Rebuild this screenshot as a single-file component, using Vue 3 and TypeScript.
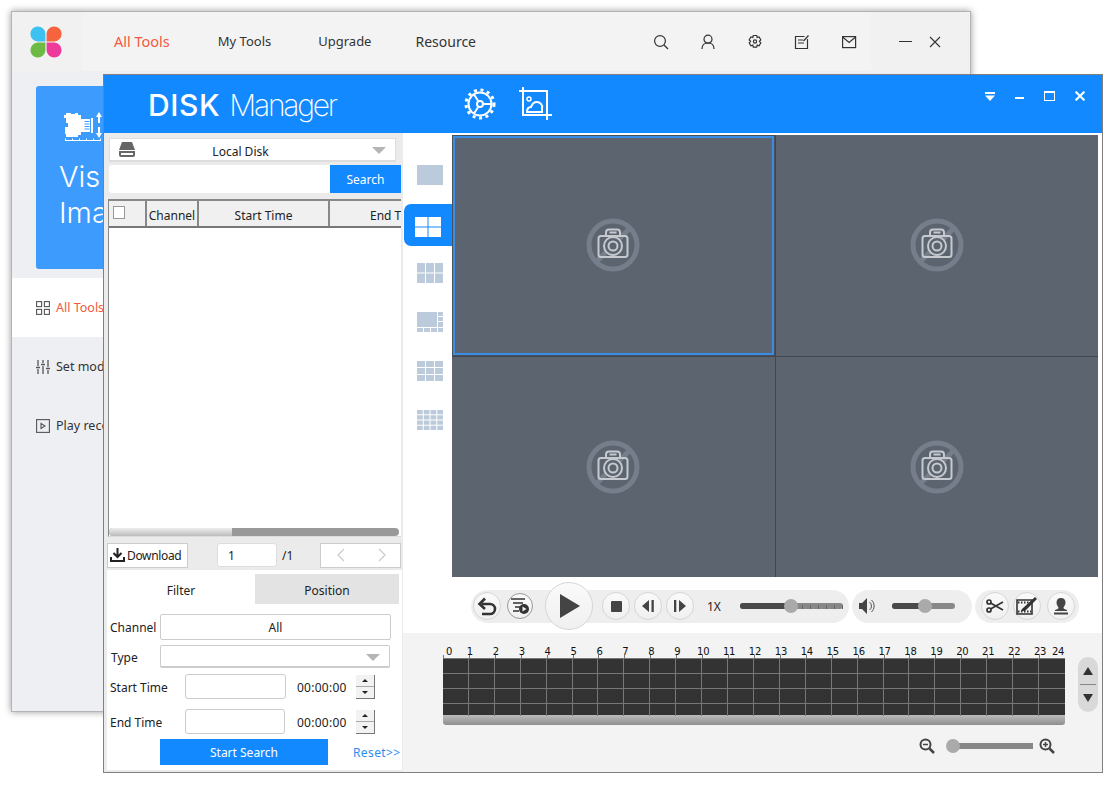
<script setup lang="ts">
const navItems = [
  { label: 'All Tools', cls: 'nav-active' },
  { label: 'My Tools', cls: 'nav-small' },
  { label: 'Upgrade', cls: 'nav-small' },
  { label: 'Resource', cls: 'nav-big' },
];

const hours = Array.from({ length: 24 }, (_, i) => i);
const cells = Array.from({ length: 96 }, (_, i) => i);
const videoCells = [0, 1, 2, 3];

// layout thumbnails on a 26x20 box
function gridRects(cols: number, rows: number) {
  const w = (26 - (cols - 1)) / cols;
  const h = (20 - (rows - 1)) / rows;
  const out: { x: number; y: number; w: number; h: number }[] = [];
  for (let r = 0; r < rows; r++) {
    for (let c = 0; c < cols; c++) {
      out.push({ x: c * (w + 1), y: r * (h + 1), w, h });
    }
  }
  return out;
}

const mixed = [
  { x: 0, y: 0, w: 20, h: 15 },
  { x: 21, y: 0, w: 5, h: 4 },
  { x: 21, y: 5, w: 5, h: 4 },
  { x: 21, y: 10, w: 5, h: 5 },
  { x: 0, y: 16, w: 6, h: 4 },
  { x: 7, y: 16, w: 6, h: 4 },
  { x: 14, y: 16, w: 6, h: 4 },
  { x: 21, y: 16, w: 5, h: 4 },
];

const layouts = [
  { rects: gridRects(1, 1), active: false },
  { rects: gridRects(2, 2), active: true },
  { rects: gridRects(3, 2), active: false },
  { rects: mixed, active: false },
  { rects: gridRects(3, 3), active: false },
  { rects: gridRects(4, 4), active: false },
];

const sliderTicks = [0, 1, 2, 3, 4, 5];
</script>

<template>
  <div class="desktop">
    <!-- back window -->
    <section class="back-win">
      <header class="back-head">
        <div class="logo-cell">
          <svg width="32" height="32" viewBox="0 0 32 32">
            <path d="M15.4 15.4H7.5A7.5 7.5 0 1 1 15.4 7.5Z" fill="#3cc1f1" />
            <path d="M16.6 15.4V7.5A7.5 7.5 0 1 1 24.5 15.4Z" fill="#f5643e" />
            <path d="M15.4 16.6V24.5A7.5 7.5 0 1 1 7.5 16.6Z" fill="#6dbb45" />
            <path d="M16.6 16.6H24.5A7.5 7.5 0 1 1 16.6 24.5Z" fill="#ee3b9b" />
          </svg>
        </div>
        <nav class="back-nav">
          <a v-for="item in navItems" :key="item.label" :class="item.cls">{{ item.label }}</a>
        </nav>
        <div class="back-icons">
          <svg width="16" height="16" viewBox="0 0 16 16" fill="none" stroke="#333" stroke-width="1.2">
            <circle cx="7" cy="7" r="5.4" /><path d="M11 11l4 4" />
          </svg>
          <svg width="16" height="16" viewBox="0 0 16 16" fill="none" stroke="#333" stroke-width="1.2">
            <circle cx="8" cy="5.2" r="4" /><path d="M2 15c0-4 2.5-6 6-6s6 2 6 6" />
          </svg>
          <svg width="16" height="16" viewBox="0 0 16 16" fill="none" stroke="#333" stroke-width="1.2">
            <path d="M6.3 1.5h3.4l.5 2 1.9-.6 1.7 2.9-1.4 1.5 1.4 1.5-1.7 2.9-1.9-.6-.5 2H6.300l-.5-2-1.900.6-1.700-2.900L3.600 7.300 2.200 5.800l1.700-2.900 1.900.6z" />
            <circle cx="8" cy="7.500" r="1.600" />
          </svg>
          <svg width="16" height="16" viewBox="0 0 16 16" fill="none" stroke="#333" stroke-width="1.2">
            <path d="M13.500 5v9.500h-12v-12h9" /><path d="M4 6h5M4 9h6" /><path d="M9.500 7l5-5.500" />
          </svg>
          <svg width="16" height="14" viewBox="0 0 16 14" fill="none" stroke="#333" stroke-width="1.2">
            <rect x="1.600" y="1.600" width="13" height="11" /><path d="M1.600 2l6.500 5.500L14.600 2" />
          </svg>
        </div>
        <div class="back-controls">
          <span class="back-min"></span>
          <svg width="12" height="12" viewBox="0 0 12 12" stroke="#333" stroke-width="1.100">
            <path d="M1 1l10 10M11 1L1 11" />
          </svg>
        </div>
      </header>
      <div class="back-body">
        <div class="banner">
          <svg class="banner-icon" width="40" height="30" viewBox="0 0 40 30" fill="#fff">
            <path d="M1 3h2V1h5v1h4V1h3v2h3v4h3v13h-3v3h-3v2H3v-3H2v-7h3v-4H3V6H1z" />
            <path d="M20 7h7v13h-7z" />
            <path d="M21.500 9.500h5M21.500 12h5M21.500 14.500h5M21.500 17h5" stroke="#3d9bfe" stroke-width="1" />
            <path d="M28 6h2v15h-2z" />
            <path d="M36 0l3 5h-2v6h-2V5h-2zM36 26l-3-5h2v-6h2v6h2z" />
            <path d="M2 28h36v1H2zM2 26.500h1v2H2zM9 26.500h1v2H9zM16 26.500h1v2h-1zM23 26.500h1v2h-1zM30 26.500h1v2h-1zM37 26.500h1v2h-1z" />
          </svg>
          <p class="banner-title">Vis<br />Ima</p>
        </div>
        <ul class="side-menu">
          <li class="menu-on">
            <svg width="14" height="14" viewBox="0 0 14 14" fill="none" stroke="#555" stroke-width="1.100">
              <rect x=".6" y=".6" width="5" height="5" /><rect x="8.400" y=".6" width="5" height="5" />
              <rect x=".6" y="8.400" width="5" height="5" /><rect x="8.400" y="8.400" width="5" height="5" />
            </svg>
            All Tools
          </li>
          <li>
            <svg width="14" height="14" viewBox="0 0 14 14" fill="none" stroke="#555" stroke-width="1.300">
              <path d="M2 0v6M2 9v5M7 0v3M7 6v8M12 0v7M12 10v4" /><path d="M0 7.500h4M5 4.500h4M10 8.500h4" />
            </svg>
            Set mode
          </li>
          <li>
            <svg width="14" height="14" viewBox="0 0 14 14" fill="none" stroke="#555" stroke-width="1.100">
              <rect x=".6" y=".6" width="12.800" height="12.800" /><path d="M5 4.500l4 2.500-4 2.500z" />
            </svg>
            Play record
          </li>
        </ul>
      </div>
    </section>

    <!-- front window -->
    <section class="disk-win">
      <header class="disk-head">
        <h1 class="disk-title"><b>DISK</b><span>Manager</span></h1>
        <div class="head-tools">
          <svg width="32" height="33" viewBox="0 0 32 33" fill="none" stroke="#fff" stroke-width="2">
            <circle cx="16" cy="17" r="11.500" />
            <circle cx="16" cy="17" r="14" stroke-width="3" stroke-dasharray="3 3.600" />
            <circle cx="16" cy="17" r="3" />
            <path d="M19 17h8M14.500 14.500L10 7.500M14.500 19.500L10 26.500" />
          </svg>
          <svg width="33" height="33" viewBox="0 0 33 33" fill="none" stroke="#fff" stroke-width="2">
            <path d="M4 0v28h29" /><path d="M0 4h28v29" />
            <circle cx="10" cy="12" r="2" stroke-width="1.500" />
            <path d="M8 25c0-3 1-5 4-5 1-3 3-5 6-5s6 3 5 6v4z" />
          </svg>
        </div>
        <div class="win-buttons">
          <svg width="10" height="9" viewBox="0 0 10 9" fill="#fff"><path d="M0 0h10v2H0zM0 3.500h10L5 9z" /></svg>
          <span class="win-min"></span>
          <span class="win-max"></span>
          <svg width="10" height="10" viewBox="0 0 10 10" stroke="#fff" stroke-width="2"><path d="M.6.6l8.800 8.800M9.400.6L.6 9.400" /></svg>
        </div>
      </header>

      <div class="disk-main">
        <aside class="left-panel">
          <div class="disk-select">
            <svg class="hdd" width="18" height="15" viewBox="0 0 18 15">
              <path d="M4 0h10l3 8H1z" fill="#666" />
              <path d="M1 9h16v4a2 2 0 0 1-2 2H3a2 2 0 0 1-2-2z" fill="#666" />
              <rect x="3" y="11" width="12" height="2" fill="#fff" />
            </svg>
            <span>Local Disk</span>
            <i class="caret"></i>
          </div>
          <div class="search-row">
            <div class="search-input"></div>
            <button class="search-btn">Search</button>
          </div>
          <div class="rec-table">
            <div class="rec-head">
              <div class="col-check"><span class="checkbox"></span></div>
              <div class="col-channel">Channel</div>
              <div class="col-start">Start Time</div>
              <div class="col-end">End T</div>
            </div>
            <div class="rec-body"></div>
            <div class="rec-scroll"><div class="rec-thumb"></div></div>
          </div>
          <div class="pager-row">
            <button class="download">
              <svg width="15" height="14" viewBox="0 0 15 14" fill="none" stroke="#222" stroke-width="2">
                <path d="M7.500 0v8M3.500 5l4 4 4-4" /><path d="M1 9v4h13V9" />
              </svg>
              Download
            </button>
            <div class="page-input">1</div>
            <span class="page-total">/1</span>
            <div class="page-nav">
              <svg width="8" height="14" viewBox="0 0 8 14" fill="none" stroke="#ccc" stroke-width="1.300"><path d="M7 1L1 7l6 6" /></svg>
              <svg width="8" height="14" viewBox="0 0 8 14" fill="none" stroke="#ccc" stroke-width="1.300"><path d="M1 1l6 6-6 6" /></svg>
            </div>
          </div>
          <div class="filter-box">
            <div class="tabs">
              <div class="tab tab-on">Filter</div>
              <div class="tab">Position</div>
            </div>
            <div class="form-row row-channel">
              <label class="lbl-short">Channel</label>
              <div class="field field-all">All</div>
            </div>
            <div class="form-row row-type">
              <label class="lbl-short lbl-type">Type</label>
              <div class="field field-type"><i class="caret"></i></div>
            </div>
            <div class="form-row row-time">
              <label class="lbl-long">Start Time</label>
              <div class="field date-a"></div>
              <span class="time">00:00:00</span>
              <div class="spin"><span class="spin-up"></span><span class="spin-down"></span></div>
            </div>
            <div class="form-row row-time row-end">
              <label class="lbl-long">End Time</label>
              <div class="field date-b"></div>
              <span class="time">00:00:00</span>
              <div class="spin"><span class="spin-up"></span><span class="spin-down"></span></div>
            </div>
            <div class="form-row row-submit">
              <button class="start-btn">Start Search</button>
              <a class="reset">Reset&gt;&gt;</a>
            </div>
          </div>
        </aside>

        <div class="right-panel">
          <div class="stage">
            <div class="layouts">
              <div v-for="(l, i) in layouts" :key="i" class="layout-item" :class="{ 'layout-on': l.active }">
                <svg width="26" height="20" viewBox="0 0 26 20">
                  <rect v-for="(r, j) in l.rects" :key="j" :x="r.x" :y="r.y" :width="r.w" :height="r.h" :fill="l.active ? '#fff' : '#bccbdc'" />
                </svg>
              </div>
            </div>
            <div class="video-grid">
              <div v-for="c in videoCells" :key="c" class="video-cell" :class="{ 'video-on': c === 0 }">
                <svg width="54" height="54" viewBox="0 0 54 54" fill="none">
                  <circle cx="27" cy="27" r="24" stroke="#757e8a" stroke-width="5" />
                  <path d="M10 44L44 10" stroke="#757e8a" stroke-width="5" />
                  <g stroke="#c6cacf" stroke-width="2">
                    <rect x="12.500" y="18" width="29" height="21" rx="2.500" />
                    <path d="M20 18v-3.500a3 3 0 0 1 3-3h8a3 3 0 0 1 3 3V18" />
                    <circle cx="27" cy="28" r="9" fill="#5c6470" />
                    <circle cx="27" cy="28" r="4.500" />
                    <path d="M23.500 14.500h7" />
                  </g>
                </svg>
              </div>
            </div>
          </div>

          <div class="controls">
            <div class="pill pill-play">
              <button class="round r-back">
                <svg width="20" height="19" viewBox="0 0 20 19" fill="none" stroke="#333" stroke-width="2.600">
                  <path d="M5 7h8a5 5 0 0 1 0 10H5" /><path d="M8 1.500L2.500 7 8 12" />
                </svg>
              </button>
              <button class="round r-list">
                <svg width="20" height="18" viewBox="0 0 20 18">
                  <path d="M1 2h14M3 6h10M5 10h5M3 14h6" stroke="#333" stroke-width="1.300" fill="none" />
                  <circle cx="14" cy="12" r="5" fill="#333" /><path d="M12.500 9.500l4 2.500-4 2.500z" fill="#eee" />
                </svg>
              </button>
              <button class="round r-play">
                <svg width="20" height="24" viewBox="0 0 20 24" fill="#444"><path d="M0 0l20 12L0 24z" /></svg>
              </button>
              <button class="round r-stop">
                <svg width="11" height="11" viewBox="0 0 11 11" fill="#444"><rect width="11" height="11" rx="1" /></svg>
              </button>
              <button class="round r-gap">
                <svg width="12" height="12" viewBox="0 0 12 12" fill="#444"><path d="M7 0v12L0 6zM9.500 0h2.300v12H9.500z" /></svg>
              </button>
              <button class="round r-gap">
                <svg width="12" height="12" viewBox="0 0 12 12" fill="#444"><path d="M5 0v12l7-6zM0 0h2.300v12H0z" /></svg>
              </button>
              <span class="speed">1X</span>
              <div class="slider speed-slider">
                <div class="slider-fill"></div>
                <div class="slider-knob"></div>
                <div class="slider-ticks"><i v-for="t in sliderTicks" :key="t"></i></div>
              </div>
            </div>
            <div class="pill pill-sound">
              <svg width="17" height="16" viewBox="0 0 17 16">
                <path d="M0 5h3l5-5v16l-5-5H0z" fill="#444" />
                <path d="M10.500 4a5 5 0 0 1 0 8M12.500 2a8 8 0 0 1 0 12" fill="none" stroke="#555" stroke-width="1" />
              </svg>
              <div class="slider sound-slider">
                <div class="slider-fill"></div>
                <div class="slider-knob"></div>
              </div>
            </div>
            <div class="pill pill-tools">
              <button class="round">
                <svg width="18" height="14" viewBox="0 0 18 14" fill="none" stroke="#333" stroke-width="1.700">
                  <circle cx="3" cy="3" r="2" /><circle cx="3" cy="11" r="2" /><path d="M4.500 4L17 11M4.500 10L17 3" />
                </svg>
              </button>
              <button class="round">
                <svg width="22" height="20" viewBox="0 0 22 20">
                  <path d="M1 4h15v14H1z" fill="none" stroke="#333" stroke-width="1.600" />
                  <path d="M2 6.500h13M2 15.500h13" stroke="#333" stroke-dasharray="1.500 1.500" stroke-width="2" />
                  <path d="M6 13L19 1l2 2L9 15H5z" fill="#333" />
                </svg>
              </button>
              <button class="round">
                <svg width="18" height="18" viewBox="0 0 18 18" fill="#444">
                  <path d="M9 1c3 0 4.500 2 4.500 4.500S12 9.500 11.500 10.500 13 12.500 15 13v1H3v-1c2-.5 4-1.500 3.500-2.500S4.500 8 4.500 5.500 6 1 9 1z" />
                  <rect x="2" y="15.500" width="14" height="2" />
                </svg>
              </button>
            </div>
          </div>

          <div class="timeline">
            <div class="tl-col">
              <div class="ruler">
                <div v-for="h in hours" :key="h" class="ruler-cell" :class="{ 'ruler-first': h === 0 }">
                  <span>{{ h }}</span>
                  <span v-if="h === 23" class="ruler-last">24</span>
                </div>
              </div>
              <div class="tl-grid">
                <div v-for="c in cells" :key="c" class="tl-cell"></div>
              </div>
              <div class="tl-bar"></div>
              <div class="zoom-row">
                <svg width="16" height="16" viewBox="0 0 16 16" fill="none" stroke="#444" stroke-width="2">
                  <circle cx="6.500" cy="6.500" r="5" /><path d="M4 6.500h5" stroke-width="1.500" /><path d="M10.500 10.500L15 15" stroke-width="2.500" />
                </svg>
                <div class="zoom-track"><div class="zoom-knob"></div></div>
                <svg width="16" height="16" viewBox="0 0 16 16" fill="none" stroke="#444" stroke-width="2">
                  <circle cx="6.500" cy="6.500" r="5" /><path d="M4 6.500h5M6.500 4v5" stroke-width="1.500" /><path d="M10.500 10.500L15 15" stroke-width="2.500" />
                </svg>
              </div>
            </div>
            <div class="tl-scroll">
              <svg width="10" height="8" viewBox="0 0 10 8" fill="#333"><path d="M5 0l5 8H0z" /></svg>
              <span class="tl-scroll-line"></span>
              <svg width="10" height="8" viewBox="0 0 10 8" fill="#333"><path d="M0 0h10L5 8z" /></svg>
            </div>
          </div>
        </div>
      </div>
    </section>
  </div>
</template>

<style scoped>
* {
  box-sizing: border-box;
}

.desktop {
  position: relative;
  width: 1118px;
  height: 789px;
  overflow: hidden;
  background: #fff;
  font-family: "Noto Sans", "Open Sans", sans-serif;
  font-size: 12px;
  color: #222;
}

button {
  font-family: inherit;
  font-size: 12px;
  border: none;
  padding: 0;
}

/* back window */
.back-win {
  position: absolute;
  left: 11px;
  top: 11px;
  width: 960px;
  height: 701px;
  border: 1px solid #b4b4b4;
  box-shadow: 0 0 7px rgba(0, 0, 0, 0.4);
  background: #eeeff2;
}

.back-head {
  display: flex;
  align-items: center;
  height: 59px;
  background: #f3f3f3;
}

.logo-cell {
  display: flex;
  align-items: center;
  justify-content: center;
  width: 70px;
  height: 59px;
  padding-right: 2px;
  background: #f1f1f1;
}

.back-nav {
  display: flex;
  align-items: center;
  gap: 47px;
  margin-left: 32px;
  padding-bottom: 1px;
}

.nav-active {
  margin-right: 1px;
  font-size: 14.5px;
  color: #f2593f;
}

.nav-small {
  font-size: 13px;
  color: #333;
}

.nav-big {
  margin-left: -3px;
  font-size: 14px;
  color: #333;
}

.back-icons {
  display: flex;
  align-items: center;
  gap: 31px;
  margin-left: auto;
  padding-right: 14px;
}

.back-controls {
  display: flex;
  align-items: center;
  gap: 17px;
  width: 99px;
  height: 59px;
  padding-left: 28px;
  background: #f1f1f1;
}

.back-min {
  width: 13px;
  height: 1px;
  background: #333;
}

.back-body {
  padding: 15px 0 0;
}

.banner {
  width: 300px;
  height: 183px;
  margin-left: 24px;
  padding: 26px 0 0 27px;
  background: #3d9bfe;
  border-radius: 3px;
}

.banner-icon {
  display: block;
}

.banner-title {
  margin: 17px 0 0 -4px;
  font-family: "Inter", "Noto Sans", sans-serif;
  font-size: 29px;
  line-height: 36px;
  font-weight: 300;
  color: #fff;
}

.side-menu {
  margin: 9px 0 0;
  padding: 0;
  list-style: none;
}

.side-menu li {
  display: flex;
  align-items: center;
  gap: 6px;
  height: 59px;
  padding-left: 24px;
  font-size: 12.5px;
  color: #333;
}

.side-menu .menu-on {
  background: #fff;
  color: #f2593f;
}

/* disk manager window */
.disk-win {
  position: absolute;
  left: 103px;
  top: 74px;
  display: flex;
  flex-direction: column;
  width: 1000px;
  height: 699px;
  border: 1px solid #808080;
  background: #fff;
}

.disk-head {
  display: flex;
  align-items: flex-start;
  height: 58px;
  background: #1289ff;
  color: #fff;
}

.disk-title {
  width: 316px;
  margin: 10px 0 0 44px;
  font-family: "Inter", "Liberation Sans", sans-serif;
  font-size: 30px;
  line-height: 40px;
  font-weight: 400;
  white-space: nowrap;
}

.disk-title b {
  font-weight: 500;
  letter-spacing: 0.6px;
}

.disk-title span {
  margin-left: 9px;
  font-weight: 200;
  letter-spacing: -2.2px;
}

.head-tools {
  display: flex;
  gap: 23px;
  margin-top: 12px;
}

.win-buttons {
  display: flex;
  align-items: center;
  gap: 20px;
  height: 10px;
  margin: 16px 17px 0 auto;
}

.win-min {
  width: 9px;
  height: 2px;
  margin-top: 3px;
  background: #fff;
}

.win-max {
  width: 11px;
  height: 10px;
  border: 1px solid #fff;
  border-top-width: 2px;
}

.disk-main {
  display: flex;
  flex: 1;
  min-height: 0;
}

/* left side */
.left-panel {
  width: 299px;
  padding-top: 5px;
  background: #ebebeb;
}

.disk-select {
  position: relative;
  display: flex;
  align-items: center;
  justify-content: center;
  width: 287px;
  height: 24px;
  margin-left: 5px;
  padding: 3px 24px 0 0;
  background: #fff;
  border: 1px solid #ddd;
  border-bottom-width: 2px;
}

.hdd {
  position: absolute;
  left: 8px;
  top: 3px;
}

.caret {
  position: absolute;
  right: 9px;
  top: 8px;
  border-left: 7px solid transparent;
  border-right: 7px solid transparent;
  border-top: 7px solid #b5b5b5;
}

.search-row {
  display: flex;
  height: 28px;
  margin: 3px 0 0 5px;
}

.search-input {
  width: 221px;
  background: #fff;
  border-radius: 3px 0 0 3px;
}

.search-btn {
  width: 71px;
  background: #1289ff;
  color: #fff;
}

.rec-table {
  display: flex;
  flex-direction: column;
  width: 293px;
  height: 338px;
  margin: 6px 0 0 4px;
  background: #fff;
  border-left: 1px solid #888;
  border-bottom: 1px solid #ddd;
  overflow: hidden;
}

.rec-head {
  display: flex;
  flex: none;
  height: 29px;
  background: #f0f0f0;
  border-top: 2px solid #888;
  border-bottom: 2px solid #777;
  white-space: nowrap;
}

.rec-head > div {
  display: flex;
  flex: none;
  align-items: center;
  justify-content: center;
  padding-top: 3px;
  border-right: 2px solid #888;
}

.rec-head .col-check {
  align-items: flex-start;
  justify-content: flex-start;
  width: 38px;
  padding: 5px 0 0 4px;
}

.checkbox {
  width: 12px;
  height: 13px;
  background: #fff;
  border: 1px solid #999;
}

.rec-head .col-channel {
  width: 52px;
}

.rec-head .col-start {
  width: 131px;
}

.rec-head .col-end {
  width: 72px;
  justify-content: flex-start;
  padding-left: 40px;
  border-right: none;
  overflow: hidden;
}

.rec-body {
  flex: 1;
}

.rec-scroll {
  flex: none;
  width: 290px;
  height: 8px;
  background: #999;
  border-radius: 4px;
}

.rec-thumb {
  width: 123px;
  height: 8px;
  background: linear-gradient(#eee, #bbb);
  border-radius: 4px 0 0 4px;
}

.pager-row {
  display: flex;
  align-items: center;
  height: 26px;
  margin: 5px 0 0 3px;
}

.download {
  display: flex;
  align-items: center;
  gap: 2px;
  width: 81px;
  height: 25px;
  padding-left: 2px;
  background: #fff;
  border: 1px solid #ccc;
  color: #222;
  letter-spacing: -0.35px;
}

.page-input {
  display: flex;
  align-items: center;
  width: 60px;
  height: 24px;
  margin-left: 29px;
  padding-left: 10px;
  background: #fff;
  border: 1px solid #ddd;
  border-radius: 3px;
}

.page-total {
  width: 43px;
  padding-left: 5px;
}

.page-nav {
  display: flex;
  align-items: center;
  justify-content: space-between;
  width: 81px;
  height: 25px;
  padding: 0 14px 0 16px;
  background: #fff;
  border: 1px solid #ccc;
}

.filter-box {
  width: 295px;
  height: 200px;
  margin: 2px 0 0 3px;
  padding-top: 4px;
  background: #fff;
}

.tabs {
  display: flex;
  height: 30px;
}

.tab {
  display: flex;
  align-items: center;
  justify-content: center;
  width: 144px;
  padding-top: 2px;
  background: #e3e3e3;
}

.tab-on {
  width: 148px;
  background: #fff;
}

.form-row {
  display: flex;
  align-items: center;
}

.field {
  background: #fff;
  border: 1px solid #ccc;
  border-radius: 2px;
}

.form-row label {
  padding-top: 1px;
}

.row-channel {
  height: 26px;
  margin-top: 10px;
}

.lbl-short {
  width: 53px;
  padding-left: 3px;
}

.lbl-type {
  padding-left: 4px;
}

.field-all {
  display: flex;
  align-items: center;
  justify-content: center;
  width: 231px;
  height: 26px;
}

.row-type {
  height: 23px;
  margin-top: 5px;
}

.field-type {
  position: relative;
  width: 230px;
  height: 23px;
  border-bottom-width: 2px;
}

.field-type .caret {
  right: 9px;
  top: 8px;
}

.row-time {
  height: 25px;
  margin-top: 6px;
}

.row-end {
  margin-top: 10px;
}

.lbl-long {
  width: 78px;
  padding-left: 3px;
}

.date-a {
  width: 101px;
  height: 25px;
  border-radius: 3px;
}

.date-b {
  width: 100px;
  height: 25px;
  margin-right: 1px;
  border-radius: 3px;
}

.time {
  width: 59px;
  margin-left: 11px;
  padding-top: 1px;
  letter-spacing: 0.25px;
}

.spin {
  display: flex;
  flex-direction: column;
  gap: 1px;
  width: 19px;
  height: 24px;
  border-right: 1px solid #777;
  border-bottom: 1px solid #777;
  background: #aaa;
}

.spin span {
  position: relative;
  flex: 1;
  background: #f2f2f2;
}

.spin span::after {
  content: '';
  position: absolute;
  left: 6px;
  border-left: 3px solid transparent;
  border-right: 3px solid transparent;
}

.spin-up::after {
  top: 4px;
  border-bottom: 3px solid #222;
}

.spin-down::after {
  top: 4px;
  border-top: 3px solid #222;
}

.row-submit {
  height: 26px;
  margin-top: 5px;
  padding-left: 53px;
}

.start-btn {
  width: 168px;
  height: 26px;
  background: #1289ff;
  color: #fff;
}

.reset {
  margin-left: 25px;
  letter-spacing: 0.4px;
  color: #2a8cf0;
}

/* right side */
.right-panel {
  display: flex;
  flex: 1;
  flex-direction: column;
  min-width: 0;
}

.stage {
  display: flex;
  height: 444px;
  padding: 2px 4px 0 1px;
}

.layouts {
  display: flex;
  flex: none;
  flex-direction: column;
  gap: 7px;
  width: 48px;
  padding-top: 19px;
}

.layout-item {
  display: flex;
  align-items: center;
  justify-content: center;
  height: 42px;
  padding-left: 4px;
}

.layout-on {
  margin: 1px 0 -1px;
  padding: 4px 0 0 0;
  background: #1289ff;
  border-radius: 7px 0 0 7px;
}

.video-grid {
  display: grid;
  flex: 1;
  grid-template-columns: 1fr 1fr;
  grid-template-rows: 1fr 1fr;
  gap: 1px;
  background: #42474f;
}

.video-cell {
  display: flex;
  align-items: center;
  justify-content: center;
  background: #5c6470;
}

.video-on {
  box-shadow: inset 0 0 0 1px #4a505a, inset 0 0 0 3px #3a8de6;
}

.controls {
  display: flex;
  align-items: center;
  gap: 3px;
  height: 55px;
  padding: 3px 0 0 68px;
  background: #fff;
}

.pill {
  display: flex;
  align-items: center;
  height: 33px;
  background: #eee;
  border-radius: 17px;
}

.round {
  display: flex;
  flex: none;
  align-items: center;
  justify-content: center;
  width: 28px;
  height: 28px;
  background: linear-gradient(#fafafa, #f0f0f0);
  border: 1px solid #d6d6d6;
  border-radius: 50%;
}

.pill-play {
  width: 378px;
  padding-left: 2px;
}

.r-list {
  width: 26px;
  height: 26px;
  margin-left: 6px;
  border-color: #999;
}

.r-play {
  width: 48px;
  height: 48px;
  margin-left: 12px;
  padding-left: 2px;
}

.r-stop {
  margin-left: 9px;
}

.r-gap {
  margin-left: 4px;
}

.speed {
  width: 15px;
  margin-left: 13px;
}

.slider {
  position: relative;
  height: 6px;
  background: #888;
  border-radius: 3px;
}

.slider-fill {
  height: 6px;
  background: #4a4a4a;
  border-radius: 3px 0 0 3px;
}

.slider-knob {
  position: absolute;
  top: -4px;
  width: 14px;
  height: 14px;
  background: #aaa;
  border-radius: 50%;
}

.speed-slider {
  width: 103px;
  margin-left: 18px;
}

.speed-slider .slider-fill {
  width: 51px;
}

.speed-slider .slider-knob {
  left: 44px;
}

.slider-ticks {
  position: absolute;
  top: 2px;
  left: 62px;
  display: flex;
  gap: 7px;
}

.slider-ticks i {
  width: 1px;
  height: 4px;
  background: #666;
}

.pill-sound {
  width: 120px;
  padding-left: 7px;
}

.sound-slider {
  width: 63px;
  margin-left: 16px;
}

.sound-slider .slider-fill {
  width: 33px;
}

.sound-slider .slider-knob {
  left: 26px;
}

.pill-tools {
  gap: 4px;
  width: 104px;
  padding-left: 6px;
}

.pill-tools .round:last-child {
  margin-left: 2px;
}

.timeline {
  display: flex;
  flex: 1;
  margin-top: 1px;
  padding: 12px 0 0 40px;
  background: #f3f3f3;
}

.tl-col {
  width: 622px;
}

.ruler {
  display: grid;
  grid-template-columns: repeat(24, 1fr);
  height: 13px;
  font-family: "DejaVu Sans", sans-serif;
  font-size: 10px;
  line-height: 13px;
  letter-spacing: -0.2px;
  color: #111;
}

.ruler-cell {
  position: relative;
  background: linear-gradient(#777, #777) left bottom / 1px 3px no-repeat;
}

.ruler-cell span {
  position: absolute;
  left: 1px;
  top: 0;
  transform: translateX(-50%);
}

.ruler-first span {
  left: 6px;
}

.ruler-cell .ruler-last {
  left: 19px;
}

.tl-grid {
  display: grid;
  grid-template-columns: repeat(24, 1fr);
  grid-template-rows: 15px 15px 15px 12px;
  height: 57px;
  background: #333;
  border-top: 1px solid #777;
}

.tl-cell {
  border-right: 1px solid #777;
  border-bottom: 1px solid #777;
}

.tl-cell:nth-child(24n) {
  border-right: none;
}

.tl-cell:nth-child(n + 73) {
  border-bottom: none;
}

.tl-bar {
  height: 10px;
  background: linear-gradient(#bbb, #8e8e8e);
  border-radius: 0 0 3px 3px;
}

.zoom-row {
  display: flex;
  align-items: center;
  justify-content: flex-end;
  height: 16px;
  margin-top: 13px;
  padding-right: 10px;
}

.zoom-track {
  position: relative;
  width: 84px;
  height: 6px;
  margin: 0 6px 0 14px;
  background: #888;
}

.zoom-knob {
  position: absolute;
  left: -3px;
  top: -4px;
  width: 14px;
  height: 14px;
  background: #aaa;
  border-radius: 50%;
}

.tl-scroll {
  display: flex;
  flex-direction: column;
  align-items: center;
  justify-content: space-between;
  width: 20px;
  height: 55px;
  margin: 12px 0 0 13px;
  padding: 10px 0;
  background: #d9d9d9;
  border-radius: 10px;
}

.tl-scroll-line {
  width: 16px;
  height: 1px;
  background: #888;
}
</style>
